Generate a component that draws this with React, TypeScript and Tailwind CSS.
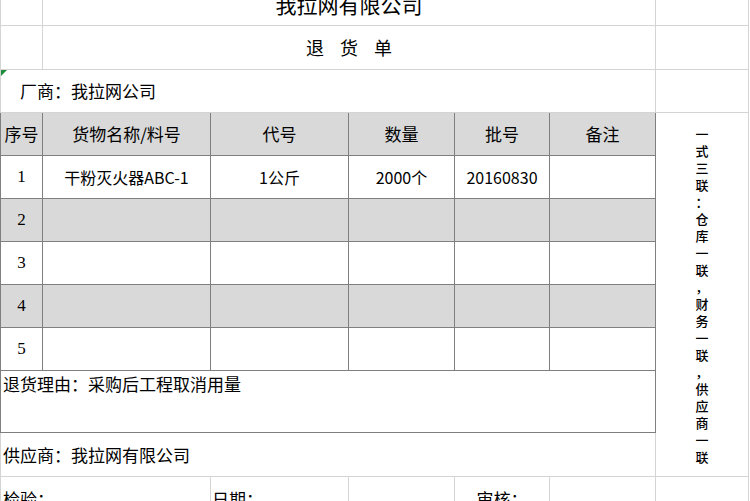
import React from 'react';

const DARK = 'border-[#7f7f7f]';
const LIGHT = 'border-[#d4d4d4]';

const headers = ['序号', '货物名称/料号', '代号', '数量', '批号', '备注'];
const widths = ['w-[43px]', 'w-[168px]', 'w-[138px]', 'w-[106px]', 'w-[95px]', 'w-[106px]'];

const rows = [
  ['1', '干粉灭火器ABC-1', '1公斤', '2000个', '20160830', ''],
  ['2', '', '', '', '', ''],
  ['3', '', '', '', '', ''],
  ['4', '', '', '', '', ''],
  ['5', '', '', '', '', ''],
];

const note = '一式三联：仓库一联，财务一联，供应商一联';

const TableRow = ({ cells, gray, header }: { cells: string[]; gray: boolean; header?: boolean }) => (
  <div className={`flex h-[43px] border-b ${DARK} ${gray ? 'bg-[#d9d9d9]' : 'bg-white'}`}>
    {cells.map((c, i) => (
      <div
        key={i}
        className={`${widths[i]} shrink-0 flex items-center justify-center border-r ${DARK} ${i === 0 ? 'border-l' : ''} ${
          header ? 'text-[17px]' : 'text-[16px]'
        } ${!header && i === 0 ? "font-['Liberation_Serif'] text-[17px]" : ''}`}
      >
        {c}
      </div>
    ))}
  </div>
);

export default function App() {
  return (
    <div className="w-[750px] h-[501px] overflow-hidden bg-white text-black font-['Noto_Sans_CJK_SC','Noto_Sans',sans-serif]">
      <div className="flex">
        {/* main sheet */}
        <div className="w-[656px] shrink-0 flex flex-col">
          <div className={`flex h-[26px] border-b ${LIGHT} overflow-hidden`}>
            <div className={`w-[43px] shrink-0 border-l border-r ${LIGHT}`} />
            <div className={`flex-1 border-r ${LIGHT} flex justify-center`}>
              <span className="text-[21px] leading-[21px] -mt-[6px]">我拉网有限公司</span>
            </div>
          </div>
          <div className={`flex h-[44px] border-b ${LIGHT}`}>
            <div className={`w-[43px] shrink-0 border-l border-r ${LIGHT}`} />
            <div className={`flex-1 border-r ${LIGHT} flex items-center justify-center gap-[16px] text-[18px]`}>
              <span>退</span>
              <span>货</span>
              <span>单</span>
            </div>
          </div>
          <div className={`relative flex items-center h-[43px] border-b ${DARK} border-l border-r ${LIGHT} pl-[19px] text-[17px]`}>
            <span className="absolute left-0 top-0 w-0 h-0 border-t-[6px] border-t-[#1e8c3a] border-r-[6px] border-r-transparent" />
            厂商：我拉网公司
          </div>

          <TableRow cells={headers} gray header />
          {rows.map((r, i) => (
            <TableRow key={i} cells={r} gray={i % 2 === 1} />
          ))}

          <div className={`h-[62px] border-l border-r border-b ${DARK} pl-[2px] pt-[4px] text-[17px] leading-[17px]`}>
            退货理由：采购后工程取消用量
          </div>
          <div className={`flex items-center h-[44px] border-l border-r border-b ${LIGHT} pl-[2px] text-[17px]`}>
            供应商：我拉网有限公司
          </div>
          <div className="flex h-[44px] text-[17px]">
            <div className={`w-[211px] shrink-0 border-l border-r ${LIGHT} flex items-center pl-[2px]`}>检验：</div>
            <div className={`w-[138px] shrink-0 border-r ${LIGHT} flex items-center pl-[1px]`}>日期：</div>
            <div className={`w-[106px] shrink-0 border-r ${LIGHT}`} />
            <div className={`w-[95px] shrink-0 border-r ${LIGHT} flex items-center justify-center`}>审核：</div>
            <div className={`w-[106px] shrink-0 border-r ${LIGHT}`} />
          </div>
        </div>

        {/* right column */}
        <div className={`w-[93px] shrink-0 flex flex-col border-r ${LIGHT}`}>
          <div className={`h-[26px] border-b ${LIGHT}`} />
          <div className={`h-[44px] border-b ${LIGHT}`} />
          <div className={`h-[43px] border-b ${LIGHT}`} />
          <div className={`h-[364px] border-b ${LIGHT} flex flex-col items-center justify-center`}>
            {note.split('').map((ch, i) => (
              <span key={i} className="block h-[17px] overflow-visible text-[13px] leading-[17px] font-medium">
                {ch}
              </span>
            ))}
          </div>
          <div className="h-[44px]" />
        </div>
      </div>
    </div>
  );
}
